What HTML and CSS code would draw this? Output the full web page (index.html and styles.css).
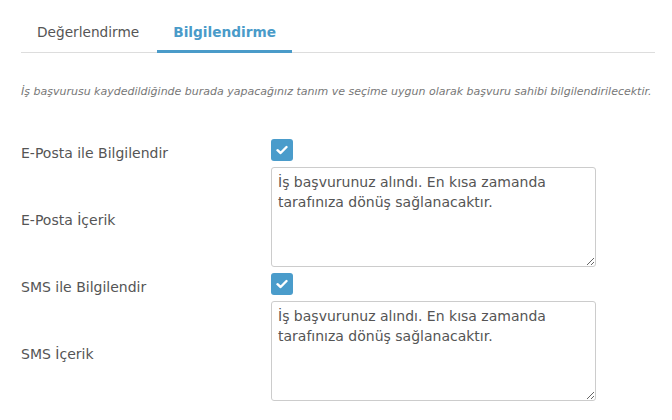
FILE: index.html
```html
<!DOCTYPE html>
<html>
<head>
	<meta charset="utf-8">
	<title>Bilgilendirme</title>
	<link rel="stylesheet" href="styles.css">
</head>
<body>
	<div class="sayfa">
		<ul class="sekmeler">
			<li class="sekme">Değerlendirme</li>
			<li class="sekme aktif">Bilgilendirme</li>
		</ul>

		<p class="aciklama">İş başvurusu kaydedildiğinde burada yapacağınız tanım ve seçime uygun olarak başvuru sahibi bilgilendirilecektir.</p>

		<form class="form">
			<label class="etiket">E-Posta ile Bilgilendir</label>
			<span class="kutu"><svg width="12" height="10" viewBox="0 0 12 10"><path d="M1.5 5.2 L4.6 8 L10.5 2" fill="none" stroke="#fff" stroke-width="2.4" stroke-linecap="round" stroke-linejoin="round"/></svg></span>

			<label class="etiket">E-Posta İçerik</label>
			<textarea class="metin">İş başvurunuz alındı. En kısa zamanda tarafınıza dönüş sağlanacaktır.</textarea>

			<label class="etiket">SMS ile Bilgilendir</label>
			<span class="kutu"><svg width="12" height="10" viewBox="0 0 12 10"><path d="M1.5 5.2 L4.6 8 L10.5 2" fill="none" stroke="#fff" stroke-width="2.4" stroke-linecap="round" stroke-linejoin="round"/></svg></span>

			<label class="etiket">SMS İçerik</label>
			<textarea class="metin">İş başvurunuz alındı. En kısa zamanda tarafınıza dönüş sağlanacaktır.</textarea>
		</form>
	</div>
</body>
</html>
```

FILE: styles.css
```css
body
{
	margin: 0;
	background-color: #fff;
	font-family: "DejaVu Sans", Verdana, sans-serif;
	color: #555;
}
.sayfa
{
	width: 634px;
	padding: 10px 0 0 21px;
}
.sekmeler
{
	display: flex;
	gap: 2px;
	margin: 0;
	padding: 0;
	list-style: none;
	border-bottom: 1px solid #ddd;
}
.sekme
{
	padding: 12px 16px 8px;
	margin-bottom: -1px;
	font-size: 13.7px;
	line-height: 20px;
	border-bottom: 3px solid transparent;
	color: #555;
}
.aktif
{
	color: #4a9bc9;
	font-weight: bold;
	border-bottom-color: #4a9bc9;
}
.aciklama
{
	margin: 32px 0 0;
	font-size: 11px;
	font-style: italic;
	line-height: 14px;
	color: #777;
}
.form
{
	display: grid;
	grid-template-columns: 250px 1fr;
	row-gap: 6px;
	margin-top: 40px;
	align-items: center;
}
.etiket
{
	padding-top: 5px;
	font-size: 14px;
	color: #555;
}
.kutu
{
	display: flex;
	align-items: center;
	justify-content: center;
	width: 22px;
	height: 22px;
	border-radius: 3px;
	background-color: #4a9ccb;
}
.metin
{
	box-sizing: border-box;
	width: 325px;
	height: 100px;
	padding: 4px 6px;
	border: 1px solid #ccc;
	border-radius: 3px;
	font-family: "DejaVu Sans", Verdana, sans-serif;
	font-size: 14px;
	line-height: 20px;
	color: #555;
}
```
